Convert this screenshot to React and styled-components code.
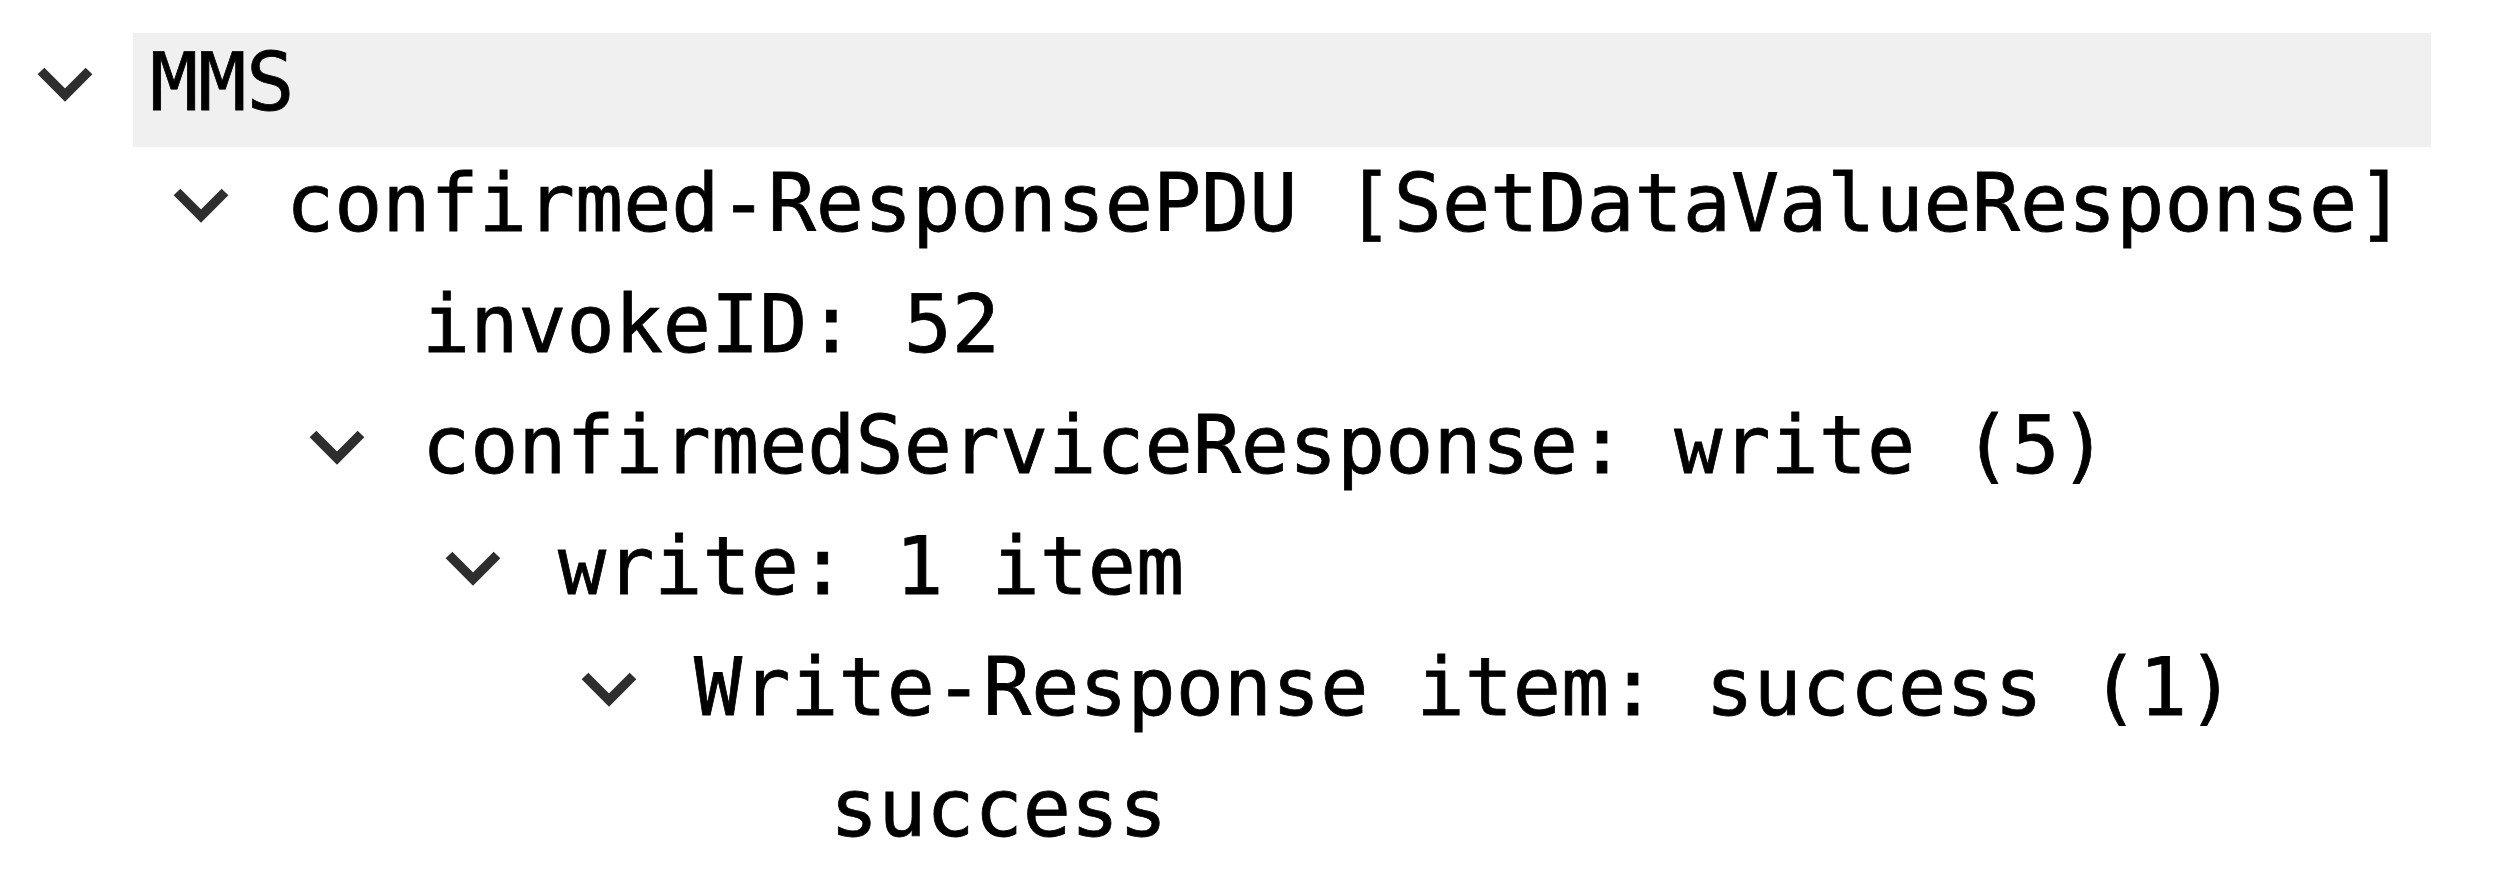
import React from "react";
import styled, { createGlobalStyle } from "styled-components";

const Global = createGlobalStyle`
  html, body { margin: 0; padding: 0; background: #ffffff; }
  body { font-family: "DejaVu Sans Mono", "Liberation Mono", monospace; }
`;

const Tree = styled.div`
  display: flex;
  flex-direction: column;
  padding: 22px 80px 0 0;
`;

const Row = styled.div`
  display: flex;
  align-items: flex-start;
  height: 121px;
  padding-left: ${(p) => p.$depth * 136}px;
`;

const Toggle = styled.div`
  flex: 0 0 133px;
  display: flex;
  align-items: flex-start;
  padding: 43px 0 0 35px;
  box-sizing: border-box;
  height: 121px;
`;

const Label = styled.div`
  flex: ${(p) => (p.$selected ? "1" : "0 0 auto")};
  box-sizing: border-box;
  height: 114px;
  margin-top: 11px;
  padding-left: 17px;
  background: ${(p) => (p.$selected ? "#f0f0f0" : "transparent")};
  color: #000000;
  font-family: "DejaVu Sans Mono", "Liberation Mono", monospace;
  font-size: 80px;
  line-height: 99px;
  -webkit-text-stroke: 0.8px #000000;
  white-space: pre;
`;

const Chevron = () => (
  <svg width="60" height="38" viewBox="0 0 60 38" fill="none">
    <polyline
      points="6,6 30,30 54,6"
      stroke="#2e2e2e"
      strokeWidth="9.5"
      strokeLinecap="butt"
      strokeLinejoin="miter"
    />
  </svg>
);

const items = [
  { depth: 0, text: "MMS", open: true, selected: true },
  { depth: 1, text: "confirmed-ResponsePDU [SetDataValueResponse]", open: true },
  { depth: 2, text: "invokeID: 52" },
  { depth: 2, text: "confirmedServiceResponse: write (5)", open: true },
  { depth: 3, text: "write: 1 item", open: true },
  { depth: 4, text: "Write-Response item: success (1)", open: true },
  { depth: 5, text: "success" },
];

export default function App() {
  return (
    <>
      <Global />
      <Tree>
        {items.map((it, i) => (
          <Row key={i} $depth={it.depth}>
            <Toggle>{it.open ? <Chevron /> : null}</Toggle>
            <Label $selected={it.selected}>{it.text}</Label>
          </Row>
        ))}
      </Tree>
    </>
  );
}
